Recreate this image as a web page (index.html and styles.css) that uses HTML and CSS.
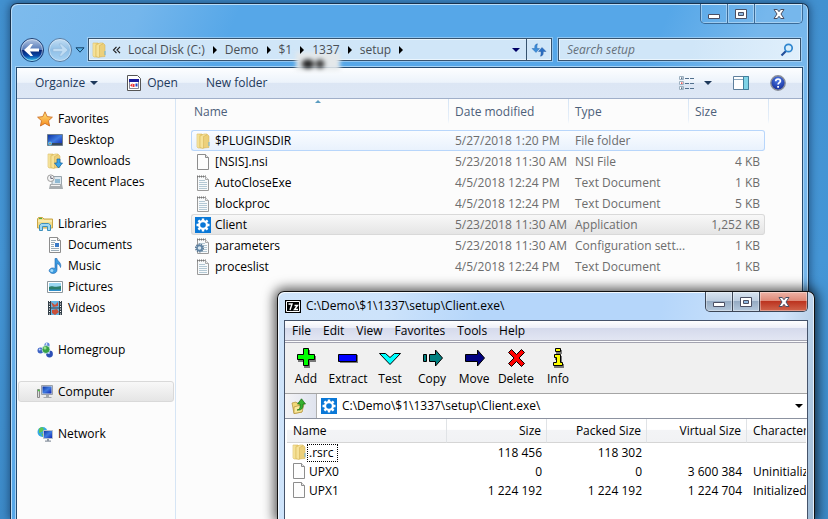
FILE: index.html
```html
<!DOCTYPE html>
<html lang="en">
<head>
  <meta charset="UTF-8">
  <title>setup</title>
  <meta name="viewport" content="width=device-width,initial-scale=1.0">
  <link rel="stylesheet" href="styles.css">
</head>
<body>
<!-- icons -->
<svg class="sprite" aria-hidden="true">
  <defs>
    <linearGradient id="g-fold" x1="0" x2="1"><stop offset="0" stop-color="#fbeeb0"/><stop offset="1" stop-color="#e0bb50"/></linearGradient>
    <linearGradient id="g-blue" x1="0" y1="0" x2="1" y2="1"><stop offset="0" stop-color="#0a2fa0"/><stop offset=".5" stop-color="#3f7be0"/><stop offset="1" stop-color="#0a1fb0"/></linearGradient>
    <linearGradient id="g-star" x1="0" y1="0" x2="0" y2="1"><stop offset="0" stop-color="#ffe680"/><stop offset="1" stop-color="#f58a1c"/></linearGradient>
    <radialGradient id="g-help" cx=".5" cy=".3" r=".8"><stop offset="0" stop-color="#4f7ce8"/><stop offset="1" stop-color="#0b1f8a"/></radialGradient>
    <linearGradient id="g-btn" x1="0" y1="0" x2="0" y2="1"><stop offset="0" stop-color="#b7c9e4"/><stop offset=".48" stop-color="#5579b8"/><stop offset=".5" stop-color="#06206e"/><stop offset=".75" stop-color="#0a48a8"/><stop offset="1" stop-color="#35d3fb"/></linearGradient>
    <linearGradient id="g-off" x1="0" y1="0" x2="0" y2="1"><stop offset="0" stop-color="#c4def4"/><stop offset=".5" stop-color="#8fbfe6"/><stop offset="1" stop-color="#a9d4f4"/></linearGradient>
  </defs>
  <symbol id="folder" viewBox="0 0 16 16">
    <path d="M2 1h5l1 1v13H3l-1-1z" fill="url(#g-fold)" stroke="#dcbc62" stroke-width=".6"/>
    <path d="M5 3l4-2h3v12l-4 2.500-3-1z" fill="#f6e298" stroke="#d8b85c" stroke-width=".6"/>
    <path d="M8.500 3.500L12.500 1.500 14 3v11.500l-5.500.5z" fill="#ecd07a" stroke="#d0ac50" stroke-width=".5"/>
    <path d="M14 9v4" stroke="#6fb3d8"/>
  </symbol>
  <symbol id="page" viewBox="0 0 16 16">
    <path d="M2.500.5h8l3 3v12h-11z" fill="#fdfdfd" stroke="#8d8d8d"/>
    <path d="M10.500.5v3h3" fill="#e6e6e6" stroke="#8d8d8d"/>
  </symbol>
  <symbol id="text" viewBox="0 0 16 16">
    <path d="M2.500 1.500h8l3 3v11h-11z" fill="#f8fafb" stroke="#9a9a9a"/>
    <path d="M2 1.500h9" stroke="#777" stroke-dasharray="1 1" stroke-width="2"/>
    <path d="M10.500 1.500v3h3" fill="#eee" stroke="#aaa"/>
    <path d="M4 5.500h6M4 7.500h8M4 9.500h8M4 11.500h8M4 13.500h8" stroke="#b3c8d4"/>
  </symbol>
  <symbol id="conf" viewBox="0 0 16 16">
    <use href="#text"/>
    <circle cx="4.500" cy="10" r="3.600" fill="none" stroke="#5b7893" stroke-width="1.800" stroke-dasharray="1.400 .8"/>
    <circle cx="4.500" cy="10" r="2.500" fill="#d9e7f0" stroke="#5e83a4" stroke-width="1.400"/>
  </symbol>
  <symbol id="gear" viewBox="0 0 16 16">
    <path d="M0 0h16v16H0z" fill="#0a78d7"/>
    <path d="M8 1.500v13M1.500 8h13M3.400 3.400l9.200 9.200M12.600 3.400l-9.200 9.200" stroke="#fff" stroke-width="2.400"/>
    <circle cx="8" cy="8" r="4.900" fill="#fff"/><circle cx="8" cy="8" r="2.800" fill="#0a78d7"/>
  </symbol>
  <symbol id="star" viewBox="0 0 16 16">
    <path d="M8 .8l2.200 4.800 5.200.6-3.900 3.500 1.100 5.300L8 12.400 3.400 15l1.100-5.300L.6 6.200l5.200-.6z" fill="url(#g-star)" stroke="#c9661c" stroke-width=".8"/>
  </symbol>
  <symbol id="desktop" viewBox="0 0 16 16">
    <path d="M.5 2.500h15v11H.5z" fill="url(#g-blue)" stroke="#6e7e8c"/>
    <path d="M1 11h14v2H1z" fill="#36485c"/><circle cx="3" cy="11.500" r="2" fill="#58c0ee"/><circle cx="3" cy="11.500" r=".8" fill="#f26a3c"/>
  </symbol>
  <symbol id="download" viewBox="0 0 16 16">
    <use href="#folder" x="-1"/>
    <path d="M10 6h3v4h2.500L11.500 15 7.500 10H10z" fill="#37a3ea" stroke="#14639f" stroke-width=".7"/>
  </symbol>
  <symbol id="recent" viewBox="0 0 16 16">
    <path d="M5 2.500h9.500v9H5z" fill="#dfe8ee" stroke="#98a4ac"/><path d="M8 5h5v4H8z" fill="#8fb9d2"/>
    <path d="M3 10h12l1 5H2z" fill="#a8adb0"/><path d="M4 11.500h9" stroke="#f4f4f4"/>
    <circle cx="3.800" cy="4.200" r="3.300" fill="#f5f5f5" stroke="#9d9d9d"/><path d="M3.800 2v2.400H6" fill="none" stroke="#667"/>
  </symbol>
  <symbol id="library" viewBox="0 0 16 16">
    <path d="M.5 3l1-1.500h4L7 3h8.500v9H.5z" fill="#f2dc8a" stroke="#c9a544"/><path d="M2 2.500h3" stroke="#4cae45"/><path d="M1 5h14" stroke="#fff6cf"/>
    <path d="M2.500 14.500V9l2-1.500h7l2 1.500v5.500h-3v-4h-5v4z" fill="#9fd8f3" stroke="#3d8fbb"/>
  </symbol>
  <symbol id="document" viewBox="0 0 16 16">
    <use href="#page"/>
    <path d="M4 3.500h5M4 5.500h4M4 7.500h3M4 9.500h3M4 11.500h8M4 13.500h8" stroke="#9aacb8"/><path d="M8 6h4v4H8z" fill="#3a7bc8"/>
  </symbol>
  <symbol id="music" viewBox="0 0 16 16">
    <path d="M8 .5h2c0 2.500 5 4 3.500 9-.5-2.500-2-3.500-3.500-3.800V12c0 2.500-2.500 3.700-4.500 3.500S1.300 13.200 2.500 11.500s3.500-2 5.500-1z" fill="#3c9be0" stroke="#1c64b0" stroke-width=".6"/>
    <circle cx="4.800" cy="12.500" r="1.500" fill="#a4dbfa"/>
  </symbol>
  <symbol id="picture" viewBox="0 0 16 16">
    <path d="M.5 2.500h15v11H.5z" fill="#fff" stroke="#8c969c"/><path d="M2 4h12v8H2z" fill="#9bd7f2"/>
    <path d="M2 8c3-2 5 1 12-1v5H2z" fill="#2b7d6a"/><path d="M2 10.500h12V12H2z" fill="#2f8fca"/>
  </symbol>
  <symbol id="video" viewBox="0 0 16 16">
    <path d="M1 1h14v14H1z" fill="#333f48"/><path d="M4 1h8v6.500H4zM4 8.500h8V15H4z" fill="#65b4e2"/>
    <path d="M4 2l4 3 3-3v4L6 7zM5 10l5-1 2 3-4 3-3-2z" fill="#c9503a"/>
    <path d="M2.500 1v14M13.500 1v14" stroke="#fff" stroke-dasharray="1 1.500"/>
  </symbol>
  <symbol id="homegroup" viewBox="0 0 16 16">
    <circle cx="3.500" cy="8.500" r="3" fill="#3d63c4"/><circle cx="10" cy="3" r="2.600" fill="#5b83d8"/><circle cx="12.500" cy="12" r="3.400" fill="#2c4fb6"/>
    <circle cx="9" cy="7.500" r="4" fill="#35a046" stroke="#dff2ff" stroke-width=".7"/><circle cx="8" cy="6" r="1.500" fill="#9be08e"/>
    <circle cx="2.700" cy="7.500" r="1" fill="#c5d8ff"/><circle cx="11.800" cy="11" r="1.100" fill="#b5ccff"/><circle cx="9.500" cy="2" r=".9" fill="#e0eaff"/>
  </symbol>
  <symbol id="computer" viewBox="0 0 16 16">
    <path d="M.5 5.500h2v8h-2z" fill="#ddd" stroke="#888"/><path d="M1 6.500h1.500" stroke="#3fd23a" stroke-width="1.500"/>
    <path d="M4.500 1.500h11v9h-11z" fill="#d7dbe0" stroke="#9aa0a8"/><path d="M5.500 2.500h9v7h-9z" fill="url(#g-blue)"/>
    <path d="M9 11h3v2h2.500v1h-8v-1H9z" fill="#a4a8ad"/>
  </symbol>
  <symbol id="network" viewBox="0 0 16 16">
    <circle cx="5.500" cy="6" r="5" fill="#35a8e4"/><path d="M2 2.500l3-1.500 2 2-2 3-3 1zM4 7l4 2-2 2z" fill="#5fc652"/>
    <path d="M6.500 4.500h9v8h-9z" fill="url(#g-blue)" stroke="#b8c0cc"/><path d="M10 13h2v1.500h2v1.200H8v-1.200h2z" fill="#8f98a4"/>
  </symbol>
  <symbol id="min" viewBox="0 0 14 12"><path d="M1.500 6.500h11v4h-11z" fill="#fff" stroke="#4a4f63"/></symbol>
  <symbol id="max" viewBox="0 0 14 12"><path d="M1.500 1.500h11v9h-11z" fill="#fff" stroke="#4a4f63"/><path d="M4.500 4.500h5v3h-5z" fill="#8fb8e0" stroke="#4a4f63"/></symbol>
  <symbol id="close" viewBox="0 0 14 12"><path d="M2 1.500h3.300L7 3.700l1.700-2.200H12L9 6l3 4.500H8.700L7 8.300l-1.700 2.200H2L5 6z" fill="#fff" stroke="#4a4f63"/></symbol>
</svg>

<main class="desktop">
  <section class="win explorer">
    <div class="caption">
      <div class="controls">
        <button aria-label="Minimize"><svg><use href="#min"/></svg></button>
        <button aria-label="Maximize"><svg><use href="#max"/></svg></button>
        <button class="x" aria-label="Close"><svg><use href="#close"/></svg></button>
      </div>
    </div>
    <div class="nav">
      <div class="travel">
        <button aria-label="Back"><svg viewBox="0 0 26 26"><circle cx="13" cy="13" r="11.500" fill="url(#g-btn)" stroke="#1d3f74"/><circle cx="13" cy="13" r="10.500" fill="none" stroke="#dbe9f7" stroke-opacity=".6"/><path d="M5 13l6.500-6H14l-3 4.500h9v3h-9l3 4.500h-2.500z" fill="#fff"/></svg></button>
        <button aria-label="Forward"><svg viewBox="0 0 26 26"><circle cx="13" cy="13" r="11.500" fill="url(#g-off)" stroke="#55799f"/><circle cx="13" cy="13" r="10.500" fill="none" stroke="#dbe9f7" stroke-opacity=".6"/><path d="M21 13l-6.500-6H12l3 4.500H6v3h9l-3 4.500h2.500z" fill="#bfdcf3" stroke="#8db3d6" stroke-width=".5"/></svg></button>
        <button class="history" aria-label="Recent pages"><svg viewBox="0 0 10 6"><path d="M1 .8h8L5 5.200z" fill="#5bb8ec" stroke="#143f66"/></svg></button>
      </div>
      <div class="address">
        <svg class="ico"><use href="#folder"/></svg>
        <button class="more" aria-label="More folders"><svg viewBox="0 0 9 8"><path d="M4.500.8L1.500 4l3 3.200M8 .8L5 4l3 3.200" fill="none" stroke="#222" stroke-width="1.200"/></svg></button>
        <a href="#">Local Disk (C:)</a><i class="sep"></i>
        <a href="#">Demo</a><i class="sep"></i>
        <a href="#">$1</a><i class="sep"></i>
        <a href="#">1337</a><i class="sep"></i>
        <a href="#">setup</a><i class="sep"></i>
        <button class="drop" aria-label="Previous locations"><i class="down"></i></button>
        <button class="refresh" aria-label="Refresh"><svg viewBox="0 0 16 14"><path d="M6.500.8C4 1 3.500 3 3.800 5.500H1L5 9.500l3.500-4H6c-.2-2 0-3.500.5-4.700z" fill="#3d8edb" stroke="#1c5ba5" stroke-width=".4"/><path d="M9.500 13.200c2.500-.2 3-2.200 2.700-4.700H15l-4-4-3.500 4H10c.2 2 0 3.500-.5 4.700z" fill="#2a6fc4" stroke="#1c4f95" stroke-width=".4"/></svg></button>
      </div>
      <label class="search">
        <input type="search" placeholder="Search setup" aria-label="Search setup">
        <svg viewBox="0 0 14 14"><path d="M1.500 12.500L6 8" stroke="#214e9a" stroke-width="2.200"/><circle cx="8.500" cy="5" r="3.700" fill="#d8eefb" stroke="#2f86cf" stroke-width="1.700"/></svg>
      </label>
    </div>

    <div class="client">
      <div class="commands">
        <button>Organize <i class="down"></i></button>
        <button class="open"><svg viewBox="0 0 16 16"><path d="M1.500.5h10l3 3v12h-13z" fill="#fff" stroke="#555"/><path d="M3.500 4.500h9v9h-9z" fill="#fff" stroke="#667" stroke-width=".8"/><path d="M3 4h10v3H3z" fill="#1b1b9c"/><path d="M4 10.300l2.500-2v4z" fill="#e33"/><path d="M7 9h1.500v3H7z" fill="#e33"/><path d="M9.500 8.500h2v3h-2z" fill="#24c"/></svg>Open</button>
        <button>New folder</button>
        <div class="views">
          <button aria-label="Change your view"><svg width="16" height="14" viewBox="0 0 16 14"><path d="M.5.5h4v3h-4zM.5 5.500h4v3h-4zM.5 10.500h4v3h-4z" fill="#fff" stroke="#9db0c0"/><path d="M2 1.500h1.500v1.200H2z" fill="#246"/><path d="M2 6.500h1.500v1.200H2z" fill="#d22"/><path d="M2 11.500h1.500v1.200H2z" fill="#246"/><path d="M6 2.500h9M6 7.500h9M6 12.500h9" stroke="#51708e" stroke-dasharray="4 1"/></svg></button>
          <button aria-label="More options"><i class="down"></i></button>
          <button aria-label="Preview pane"><svg width="16" height="14" viewBox="0 0 16 14"><path d="M.5.5h15v13H.5z" fill="#fff" stroke="#5e7f9c"/><path d="M1 3.500h9" stroke="#8aa6bd"/><path d="M10.500.5h5v13h-5z" fill="#7fd3e6" stroke="#3f7f9c"/></svg></button>
          <button aria-label="Help"><svg width="16" height="16" viewBox="0 0 16 16"><circle cx="8" cy="8" r="7.200" fill="url(#g-help)" stroke="#8a8f9a" stroke-width="1.400"/><path d="M5.700 6.300c0-3 4.700-3 4.700-.3 0 1.700-2.300 1.700-2.300 3.600" fill="none" stroke="#fff" stroke-width="1.700"/><path d="M7.200 11h1.800v1.700H7.200z" fill="#fff"/></svg></button>
        </div>
      </div>
      <div class="panes">
        <nav class="tree">
          <ul>
            <li><a href="#"><svg class="ico"><use href="#star"/></svg>Favorites</a></li>
            <li class="sub"><a href="#"><svg class="ico"><use href="#desktop"/></svg>Desktop</a></li>
            <li class="sub"><a href="#"><svg class="ico"><use href="#download"/></svg>Downloads</a></li>
            <li class="sub"><a href="#"><svg class="ico"><use href="#recent"/></svg>Recent Places</a></li>
          </ul>
          <ul>
            <li><a href="#"><svg class="ico"><use href="#library"/></svg>Libraries</a></li>
            <li class="sub"><a href="#"><svg class="ico"><use href="#document"/></svg>Documents</a></li>
            <li class="sub"><a href="#"><svg class="ico"><use href="#music"/></svg>Music</a></li>
            <li class="sub"><a href="#"><svg class="ico"><use href="#picture"/></svg>Pictures</a></li>
            <li class="sub"><a href="#"><svg class="ico"><use href="#video"/></svg>Videos</a></li>
          </ul>
          <ul>
            <li><a href="#"><svg class="ico"><use href="#homegroup"/></svg>Homegroup</a></li>
          </ul>
          <ul>
            <li class="active"><a href="#"><svg class="ico"><use href="#computer"/></svg>Computer</a></li>
          </ul>
          <ul>
            <li><a href="#"><svg class="ico"><use href="#network"/></svg>Network</a></li>
          </ul>
        </nav>
        <div class="list">
          <table class="files">
            <colgroup><col class="c-name"><col class="c-date"><col class="c-type"><col class="c-size"></colgroup>
            <thead>
              <tr><th class="sorted">Name</th><th>Date modified</th><th>Type</th><th>Size</th></tr>
            </thead>
            <tbody>
              <tr class="hover"><td><svg class="ico"><use href="#folder"/></svg>$PLUGINSDIR</td><td>5/27/2018 1:20 PM</td><td>File folder</td><td></td></tr>
              <tr><td><svg class="ico"><use href="#page"/></svg>[NSIS].nsi</td><td>5/23/2018 11:30 AM</td><td>NSI File</td><td>4 KB</td></tr>
              <tr><td><svg class="ico"><use href="#text"/></svg>AutoCloseExe</td><td>4/5/2018 12:24 PM</td><td>Text Document</td><td>1 KB</td></tr>
              <tr><td><svg class="ico"><use href="#text"/></svg>blockproc</td><td>4/5/2018 12:24 PM</td><td>Text Document</td><td>5 KB</td></tr>
              <tr class="picked"><td><svg class="ico"><use href="#gear"/></svg>Client</td><td>5/23/2018 11:30 AM</td><td>Application</td><td>1,252 KB</td></tr>
              <tr><td><svg class="ico"><use href="#conf"/></svg>parameters</td><td>5/23/2018 11:30 AM</td><td>Configuration sett...</td><td>1 KB</td></tr>
              <tr><td><svg class="ico"><use href="#text"/></svg>proceslist</td><td>4/5/2018 12:24 PM</td><td>Text Document</td><td>1 KB</td></tr>
            </tbody>
          </table>
        </div>
      </div>
    </div>
  </section>

  <section class="win zip">
    <div class="caption">
      <h1><svg viewBox="0 0 16 13"><path d="M0 0h16v13H0z" fill="#000"/><path d="M1.500 1.500h13v10h-13z" fill="none" stroke="#fff"/><path d="M3.500 4H7L5 10M9.500 5.500h3l-3 4h3.500" fill="none" stroke="#fff" stroke-width="1.400"/></svg>C:\Demo\$1\1337\setup\Client.exe\</h1>
      <div class="controls">
        <button aria-label="Minimize"><svg><use href="#min"/></svg></button>
        <button aria-label="Maximize"><svg><use href="#max"/></svg></button>
        <button class="x" aria-label="Close"><svg><use href="#close"/></svg></button>
      </div>
    </div>
    <div class="client">
      <div class="menu">
        <button>File</button><button>Edit</button><button>View</button><button>Favorites</button><button>Tools</button><button>Help</button>
      </div>
      <div class="tools">
        <button><svg viewBox="0 0 24 22"><path d="M10 3h6v6h6v6h-6v6h-6v-6H4V9h6z" fill="#777"/><path d="M9.500 1.500h5v6h6v5h-6v6h-5v-6h-6v-5h6z" fill="#0f0" stroke="#000"/></svg>Add</button>
        <button><svg viewBox="0 0 24 22"><path d="M4 8h18v8H4z" fill="#777"/><path d="M2.500 7.500h18v7h-18z" fill="#00f" stroke="#000"/></svg>Extract</button>
        <button><svg viewBox="0 0 24 22"><path d="M1.500 6.500h6l4.500 4 4.500-4h6L12 17.500z" fill="#0ff" stroke="#000"/></svg>Test</button>
        <button><svg viewBox="0 0 24 22"><path d="M3.500 7.500h3v7h-3zM9.500 7.500h6V3l7 8-7 8v-4.500h-6z" fill="#008080" stroke="#000"/></svg>Copy</button>
        <button><svg viewBox="0 0 24 22"><path d="M3.500 7.500h12V3l7 8-7 8v-4.500h-12z" fill="#000080" stroke="#000"/></svg>Move</button>
        <button><svg viewBox="0 0 24 22"><path d="M4.500 5.500l3-3 5 5 5-5 3 3-5.500 5.500 5.500 5.500-3 3-5-5-5 5-3-3L10 11z" fill="#f00" stroke="#000"/></svg>Delete</button>
        <button><svg viewBox="0 0 24 22"><path d="M10 3h6v4h-6zM9 9h7v8h2v4H8v-4h3v-4H9z" fill="#777"/><path d="M9.500 1.500h5v3h-5zM8.500 7.500h6v8h2v3h-9v-3h3v-5h-2z" fill="#ff0" stroke="#000"/></svg>Info</button>
      </div>
      <div class="path">
        <button class="up" aria-label="Up one level"><svg viewBox="0 0 16 16"><path d="M1 5l4-1 1 1h4l1 9-8 1.500z" fill="#f0d878" stroke="#b28f34" stroke-width=".7"/><path d="M3 9l10-3-2 8-8 1.500z" fill="#fbe99c" stroke="#b28f34" stroke-width=".7"/><path d="M6 12c3-.5 3.500-3 3-6H6.500L10.500.8l4 5.200H12c.4 5-2 6.500-6 6z" fill="#35b02e" stroke="#146914" stroke-width=".7"/></svg></button>
        <div class="combo">
          <svg class="ico"><use href="#gear"/></svg>
          <select aria-label="Path"><option>C:\Demo\$1\1337\setup\Client.exe\</option></select>
          <i class="down"></i>
        </div>
      </div>
      <div class="sheet">
        <table class="sections">
          <colgroup><col class="s-name"><col class="s-num"><col class="s-num"><col class="s-num"><col class="s-num"></colgroup>
          <thead>
            <tr><th>Name</th><th>Size</th><th>Packed Size</th><th>Virtual Size</th><th>Characteristics</th></tr>
          </thead>
          <tbody>
            <tr><td><svg class="ico"><use href="#folder"/></svg><span class="focus">.rsrc</span></td><td>118 456</td><td>118 302</td><td></td><td></td></tr>
            <tr><td><svg class="ico"><use href="#page"/></svg><span>UPX0</span></td><td>0</td><td>0</td><td>3 600 384</td><td>UninitializedData</td></tr>
            <tr><td><svg class="ico"><use href="#page"/></svg><span>UPX1</span></td><td>1 224 192</td><td>1 224 192</td><td>1 224 704</td><td>InitializedData</td></tr>
          </tbody>
        </table>
      </div>
    </div>
  </section>
</main>
</body>
</html>
```

FILE: styles.css
```css
*{
  margin: 0;
  padding: 0;
  box-sizing: border-box;
}
body{
  font: 12px/16px "Open Sans", "Noto Sans", sans-serif;
  color: #000;
}
button,input,select{
  font: inherit;
  color: inherit;
  background: none;
  border: 0;
}
a{
  color: inherit;
  text-decoration: none;
}
ul{
  list-style: none;
}
svg{
  display: block;
  flex-shrink: 0;
}
.sprite{
  position: absolute;
  width: 0;
  height: 0;
}
.ico{
  width: 16px;
  height: 16px;
}
.desktop{
  position: relative;
  height: 100vh;
  overflow: hidden;
  background: linear-gradient(#4291d0, #4596d6 50%, #3d8bc9);
}
.down{
  flex-shrink: 0;
  border: 4px solid transparent;
  border-top-color: #1e395b;
  border-bottom: 0;
}

/* windows */
.win{
  position: absolute;
  display: flex;
  flex-direction: column;
  padding: 0 5px;
  border: 1px solid #17324e;
  border-radius: 7px 7px 0 0;
}
.client{
  flex: 1;
  display: flex;
  flex-direction: column;
  min-height: 0;
  overflow: hidden;
  border: 1px solid #23496e;
  border-bottom: 0;
}
.caption{
  display: flex;
  justify-content: space-between;
}
.controls{
  display: flex;
  margin-left: auto;
  height: 20px;
  border: 1px solid #3a6b99;
  border-top: 0;
  border-radius: 0 0 5px 5px;
  overflow: hidden;
}
.controls button{
  display: flex;
  align-items: center;
  justify-content: center;
  width: 27px;
  border-right: 1px solid #3a6b99;
  box-shadow: inset 0 0 0 1px rgba(255,255,255,.35);
}
.controls .x{
  width: 47px;
  border-right: 0;
}
.controls svg{
  width: 14px;
  height: 12px;
}

/* explorer */
.explorer{
  top: 3px;
  left: 10px;
  right: 19px;
  bottom: 0;
  border-bottom: 0;
  background: linear-gradient(115deg, #7dbbed, #74b6ec 120px, #56a7e8 210px, #56a7e8 600px, #76b7ec 690px);
  box-shadow: inset 1px 1px 0 #b9dcf8, inset -1px 0 0 #b9dcf8, 0 0 8px 1px rgba(0,20,50,.5);
}
.explorer .caption{
  height: 34px;
}
.explorer .client{
  background: #fcfcfc;
  box-shadow: 0 0 0 1px #a5d2f5;
}
.nav{
  display: flex;
  align-items: center;
  height: 23px;
  padding: 0 2px 0 3px;
  margin-bottom: 6px;
}
.travel{
  display: flex;
  align-items: center;
  gap: 2px;
}
.travel svg{
  width: 26px;
  height: 26px;
}
.travel .history svg{
  width: 10px;
  height: 6px;
}
.address,.search{
  display: flex;
  align-items: center;
  height: 23px;
  border: 1px solid #36536f;
  box-shadow: inset 0 0 0 1px #eaf5fd, 0 0 0 1px rgba(200,228,250,.5);
  background: #d0e6f8;
  color: #4a4f55;
}
.address{
  position: relative;
  flex: 1;
  margin: 0 6px 0 3px;
  padding-left: 2px;
}
/* shape seen through the glass */
.address:before{
  content: "";
  position: absolute;
  left: 207px;
  top: 13px;
  width: 44px;
  height: 18px;
  background: radial-gradient(ellipse 8px 6px at 12px 12px, #222 50%, transparent), radial-gradient(ellipse 6px 6px at 24px 12px, #333 40%, transparent), #e4e8ea;
  filter: blur(2px);
}
.address a{
  position: relative;
}
.more{
  margin: 0 7px 0 5px;
}
.more svg{
  width: 9px;
  height: 8px;
}
.sep{
  position: relative;
  margin: 0 8px;
  border: 4px solid transparent;
  border-left-color: #000;
  border-right: 0;
}
.drop{
  margin-left: auto;
  padding: 0 6px;
}
.drop .down{
  display: block;
  border-top-color: #000066;
}
.refresh{
  align-self: stretch;
  padding: 0 4px;
  border-left: 1px solid #36536f;
}
.refresh svg{
  width: 16px;
  height: 14px;
}
.search{
  flex: 0 1 243px;
  padding: 0 6px 0 8px;
  background: linear-gradient(100deg, #d0e6f8 55%, #e0effb);
}
.search input{
  flex: 1;
  min-width: 0;
  outline: 0;
}
.search input::placeholder{
  font-style: italic;
  color: #66707a;
  opacity: 1;
}
.search svg{
  width: 14px;
  height: 14px;
}
.commands{
  display: flex;
  align-items: center;
  flex-shrink: 0;
  height: 31px;
  padding: 0 16px 0 18px;
  gap: 28px;
  color: #1e395b;
  background: linear-gradient(#fdfeff, #ecf3fb 48%, #dce6f4 50%, #dde7f5);
  border-bottom: 1px solid #a0afc9;
}
.commands button{
  display: flex;
  align-items: center;
  gap: 5px;
}
.open svg{
  width: 16px;
  height: 16px;
}
.views{
  display: flex;
  align-items: center;
  margin-left: auto;
}
.views button{
  margin-left: 21px;
}
.views button:nth-child(2){
  margin-left: 9px;
}
.panes{
  flex: 1;
  display: flex;
  min-height: 0;
}
.tree{
  width: 159px;
  flex-shrink: 0;
  padding: 9px 1px 0;
  border-right: 1px solid #d6e5f5;
}
.tree ul{
  margin-bottom: 21px;
}
.tree a{
  display: flex;
  align-items: center;
  gap: 5px;
  height: 21px;
  padding-left: 18px;
  border: 1px solid transparent;
  border-radius: 3px;
}
.tree .sub a{
  padding-left: 28px;
}
.tree .active a{
  border-color: #d9d9d9;
  background: linear-gradient(#f8f8f8, #e5e5e5);
}
.list{
  flex: 1;
  min-width: 0;
  padding-left: 15px;
}
.files,.sections{
  table-layout: fixed;
  border-spacing: 0;
}
.files{
  width: 574px;
}
.c-name{
  width: 257px;
}
.c-date,.c-type{
  width: 120px;
}
.c-size{
  width: 77px;
}
th{
  font-weight: normal;
  text-align: left;
}
td,th{
  white-space: nowrap;
}
td .ico{
  display: inline-block;
  vertical-align: top;
  margin-right: 4px;
}
.files th{
  position: relative;
  height: 31px;
  padding: 5px 7px 0;
  vertical-align: top;
  color: #4c607a;
}
.files th:first-child{
  padding-left: 3px;
}
.files th:after{
  content: "";
  position: absolute;
  top: 0;
  right: -1px;
  width: 1px;
  height: 25px;
  background: linear-gradient(#d5e5f5, #e6eff9 80%, #fcfcfc);
}
.files th:last-child:after{
  right: -4px;
}
.sorted:before{
  content: "";
  position: absolute;
  top: 1px;
  left: 124px;
  border: 3px solid transparent;
  border-bottom-color: #5b9cc0;
  border-top: 0;
}
.files td{
  height: 21px;
  padding: 0 0 0 7px;
  color: #6d6d6d;
  border: 1px solid transparent;
  border-width: 1px 0;
}
.files td:first-child{
  padding-left: 3px;
  color: #000;
  border-left-width: 1px;
  border-radius: 3px 0 0 3px;
}
.files td:last-child{
  padding-right: 4px;
  text-align: right;
  border-right-width: 1px;
  border-radius: 0 3px 3px 0;
}
.hover td{
  border-color: #b8d6fb;
  background: linear-gradient(#fafcff, #e9f2fd);
}
.picked td{
  border-color: #d9d9d9;
  background: linear-gradient(#f8f8f8, #e5e5e5);
}

/* 7-zip */
.zip{
  top: 291px;
  left: 277px;
  right: 13px;
  bottom: 0;
  padding: 0 6px;
  border-color: #111;
  border-bottom: 0;
  background: linear-gradient(100deg, #cfe4fa, #cde3fb 110px, #b5d6fa 200px, #b5d6fa 380px, #d2e5fa 500px, #9db9d3);
  box-shadow: inset 1px 1px 0 #f2f9ff, inset -1px 0 0 #e3effa, 0 0 12px 3px rgba(0,0,0,.65);
}
.zip .caption{
  height: 28px;
}
.zip h1{
  display: flex;
  align-items: center;
  gap: 5px;
  padding-left: 1px;
  font-size: 12px;
  font-weight: normal;
}
.zip h1 svg{
  width: 16px;
  height: 13px;
}
.zip .controls{
  border-color: #3c4656;
  background: linear-gradient(#d8e4f0, #bccddf 48%, #95abc3 50%, #b4c8dc);
}
.zip .controls button{
  border-color: #3c4656;
}
.zip .controls .x{
  background: linear-gradient(#eeb3a6, #dd8876 48%, #bc3420 50%, #d0654c);
}
.zip .client{
  border-color: #45536a;
  background: #fff;
}
.menu{
  display: flex;
  flex-shrink: 0;
  align-items: center;
  height: 22px;
  padding-left: 1px;
  background: linear-gradient(#fff, #eef0f8 35%, #d5daec 38%, #e2e6f3);
  border-bottom: 3px double #a3a3b0;
}
.menu button{
  padding: 0 6px;
}
.tools{
  display: flex;
  flex-shrink: 0;
  height: 51px;
  background: #f0f0f0;
  border-bottom: 1px solid #a5a5a5;
}
.tools button{
  display: flex;
  flex-direction: column;
  align-items: center;
  width: 42px;
  padding-top: 4px;
  gap: 2px;
}
.tools svg{
  width: 24px;
  height: 22px;
}
.path{
  display: flex;
  flex-shrink: 0;
  height: 25px;
  border-bottom: 1px solid #8c92a0;
}
.up{
  width: 32px;
  padding-left: 6px;
  background: linear-gradient(90deg, #f4f4f6, #dfe3ee);
  border-right: 1px solid #b0b0b0;
}
.up svg{
  width: 16px;
  height: 16px;
}
.combo{
  position: relative;
  flex: 1;
  display: flex;
  align-items: center;
  padding: 0 4px;
}
.combo select{
  flex: 1;
  padding-left: 5px;
  appearance: none;
  outline: 0;
}
.combo .down{
  position: absolute;
  right: 4px;
  pointer-events: none;
  border-top-color: #000;
}
.sheet{
  flex: 1;
  margin-right: 1px;
  padding-left: 2px;
  overflow: hidden;
}
.sections{
  width: 560px;
}
.s-name{
  width: 160px;
}
.s-num{
  width: 100px;
}
.sections th{
  height: 24px;
  padding: 0 5px 0 6px;
  border-right: 1px solid #e0e3e6;
  border-bottom: 1px solid #d5d5d5;
  background: linear-gradient(#fff 45%, #f3f4f6 50%, #f1f2f4);
}
.sections td{
  height: 19px;
  padding: 0 5px 0 6px;
}
.sections td:first-child{
  padding-left: 4px;
}
.sections th:nth-child(n+2):nth-child(-n+4),.sections td:nth-child(n+2):nth-child(-n+4){
  text-align: right;
}
.sections td .ico{
  margin-right: 0;
}
.sections span{
  display: inline-block;
  padding: 0 1px;
  border: 1px solid transparent;
  line-height: 16px;
}
.sections .focus{
  padding-right: 4px;
  border: 1px dotted #000;
}
```
